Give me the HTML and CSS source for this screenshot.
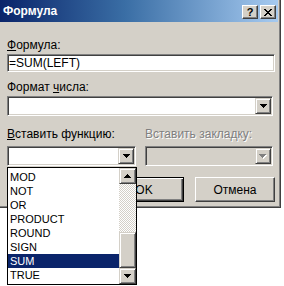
FILE: index.html
```html
<!DOCTYPE html>
<html lang="ru">
<head>
<meta charset="utf-8">
<title>Формула</title>
<link rel="stylesheet" href="styles.css">
</head>
<body>
<div class="page">
<div class="window">
  <div class="titlebar">
    <span class="title">Формула</span>
    <div class="caption-btns">
      <span class="cbtn help">?</span>
      <span class="cbtn close"><svg width="8" height="7" viewBox="0 0 8 7" shape-rendering="crispEdges"><path d="M0 0h2v1h1v1h2v-1h1v-1h2v1h-1v1h-1v1h-1v1h1v1h1v1h1v1h-2v-1h-1v-1h-2v1h-1v1h-2v-1h1v-1h1v-1h1v-1h-1v-1h-1v-1h-1z" fill="#000"/></svg></span>
    </div>
  </div>
  <div class="content">
    <div class="label label-formula"><u>Ф</u>ормула:</div>
    <div class="field">=SUM(LEFT)</div>
    <div class="label label-format">Формат <u>ч</u>исла:</div>
    <div class="combo combo-wide">
      <span class="combo-text"></span>
      <span class="drop"><svg width="7" height="4" viewBox="0 0 7 4" shape-rendering="crispEdges"><path d="M0 0h7v1h-1v1h-1v1h-1v1h-1v-1h-1v-1h-1v-1h-1z" fill="#000"/></svg></span>
    </div>
    <div class="pair">
      <div class="col col-func">
        <div class="label"><u>В</u>ставить функцию:</div>
        <div class="combo-wrap">
          <div class="combo">
            <span class="combo-text"></span>
            <span class="drop"><svg width="7" height="4" viewBox="0 0 7 4" shape-rendering="crispEdges"><path d="M0 0h7v1h-1v1h-1v1h-1v1h-1v-1h-1v-1h-1v-1h-1z" fill="#000"/></svg></span>
          </div>
          <div class="listbox">
            <ul class="items">
              <li>MOD</li>
              <li>NOT</li>
              <li>OR</li>
              <li>PRODUCT</li>
              <li>ROUND</li>
              <li>SIGN</li>
              <li class="selected">SUM</li>
              <li>TRUE</li>
            </ul>
            <div class="scrollbar">
              <span class="sbtn"><svg width="7" height="4" viewBox="0 0 7 4" shape-rendering="crispEdges"><path d="M3 0h1v1h1v1h1v1h1v1h-7v-1h1v-1h1v-1h1z" fill="#000"/></svg></span>
              <span class="track"></span>
              <span class="thumb"></span>
              <span class="sbtn"><svg width="7" height="4" viewBox="0 0 7 4" shape-rendering="crispEdges"><path d="M0 0h7v1h-1v1h-1v1h-1v1h-1v-1h-1v-1h-1v-1h-1z" fill="#000"/></svg></span>
            </div>
          </div>
        </div>
      </div>
      <div class="col col-bm">
        <div class="label disabled">Вставить закладку:</div>
        <div class="combo is-disabled">
          <span class="combo-text"></span>
          <span class="drop"><svg width="8" height="5" viewBox="0 0 8 5" shape-rendering="crispEdges"><path d="M1 1h7v1h-1v1h-1v1h-1v1h-1v-1h-1v-1h-1v-1h-1z" fill="#fff"/><path d="M0 0h7v1h-1v1h-1v1h-1v1h-1v-1h-1v-1h-1v-1h-1z" fill="#808080"/></svg></span>
        </div>
      </div>
    </div>
    <div class="buttons">
      <span class="btn default">OK</span>
      <span class="btn">Отмена</span>
    </div>
  </div>
</div>
</div>
</body>
</html>
```

FILE: styles.css
```css
* {
  box-sizing: border-box;
}

html, body {
  margin: 0;
  padding: 0;
  background: #fff;
}

body {
  font-family: "Liberation Sans", Arial, sans-serif;
  font-size: 12px;
  color: #000;
}

.page {
  min-height: 286px;
  position: relative;
}

.window {
  width: 281px;
  height: 208px;
  background: #d4d0c8;
  border-right: 1px solid #404040;
  border-bottom: 1px solid #404040;
  box-shadow: inset -1px -1px 0 #808080;
  display: flex;
  flex-direction: column;
}

.titlebar {
  height: 22px;
  margin-right: 2px;
  background: linear-gradient(to right, #0a246a 0%, #3a6ea5 45%, #a6caf0 100%);
  display: flex;
  align-items: center;
  justify-content: space-between;
  padding-left: 3px;
}

.title {
  color: #fff;
  font-weight: bold;
  font-size: 12px;
  line-height: 14px;
}

.caption-btns {
  display: flex;
  gap: 2px;
  margin-top: 2px;
  margin-right: 2px;
}

.cbtn {
  width: 16px;
  height: 14px;
  background: #d4d0c8;
  border: 1px solid;
  border-color: #fff #404040 #404040 #fff;
  box-shadow: inset -1px -1px 0 #808080;
  display: flex;
  align-items: center;
  justify-content: center;
}

.cbtn.help {
  font-weight: bold;
  font-size: 11px;
  line-height: 12px;
}

.content {
  padding: 0 5px 0 7px;
  display: flex;
  flex-direction: column;
}

.label {
  line-height: 14px;
  height: 14px;
  white-space: nowrap;
}

.label u {
  text-decoration: underline;
  text-underline-offset: 1px;
}

.label.disabled {
  color: #808080;
  text-shadow: 1px 1px 0 #fff;
}

.label-formula {
  margin-top: 16px;
}

.field {
  margin-top: 2px;
  height: 18px;
  background: #fff;
  border: 1px solid;
  border-color: #808080 #fff #fff #808080;
  box-shadow: inset 1px 1px 0 #404040, inset -1px -1px 0 #d4d0c8;
  padding: 0 1px;
  line-height: 16px;
}

.label-format {
  margin-top: 8px;
}

.combo {
  height: 20px;
  background: #fff;
  border: 1px solid;
  border-color: #808080 #fff #fff #808080;
  box-shadow: inset 1px 1px 0 #404040, inset -1px -1px 0 #d4d0c8;
  padding: 1px;
  display: flex;
}

.combo.is-disabled {
  background: #d4d0c8;
}

.combo-wide {
  margin-top: 2px;
  margin-right: 2px;
}

.combo-text {
  flex: 1;
}

.drop,
.sbtn {
  width: 16px;
  height: 16px;
  background: #d4d0c8;
  border: 1px solid;
  border-color: #d4d0c8 #404040 #404040 #d4d0c8;
  box-shadow: inset 1px 1px 0 #fff, inset -1px -1px 0 #808080;
  display: flex;
  align-items: center;
  justify-content: center;
}

.pair {
  margin-top: 11px;
  display: flex;
  gap: 9px;
  margin-right: 2px;
}

.col-func {
  width: 129px;
}

.col-bm {
  flex: 1;
}

.col .combo {
  margin-top: 5px;
}

.combo-wrap {
  position: relative;
}

.listbox {
  position: absolute;
  left: 0;
  top: calc(100% + 1px);
  width: 130px;
  height: 118px;
  background: #fff;
  border: 1px solid #000;
  display: flex;
  z-index: 5;
}

.items {
  list-style: none;
  margin: 0;
  padding: 2px 0;
  flex: 1;
}

.items li {
  height: 14px;
  line-height: 14px;
  padding-left: 2px;
  font-size: 11px;
}

.items li.selected {
  background: #0a246a;
  color: #fff;
}

.scrollbar {
  width: 17px;
  display: flex;
  flex-direction: column;
}

.scrollbar .sbtn {
  width: 17px;
  height: 16px;
}

.track {
  flex: 1;
  background-color: #fff;
  background-image: repeating-conic-gradient(#d4d0c8 0 25%, #fff 0 50%);
  background-size: 2px 2px;
}

.thumb {
  height: 36px;
  background: #d4d0c8;
  border: 1px solid;
  border-color: #d4d0c8 #404040 #404040 #d4d0c8;
  box-shadow: inset 1px 1px 0 #fff, inset -1px -1px 0 #808080;
}

.buttons {
  margin-top: 11px;
  display: flex;
  justify-content: flex-end;
  gap: 11px;
}

.btn {
  width: 80px;
  height: 25px;
  background: #d4d0c8;
  border: 1px solid;
  border-color: #fff #404040 #404040 #fff;
  box-shadow: inset -1px -1px 0 #808080;
  display: flex;
  align-items: center;
  justify-content: center;
  font-size: 12px;
}

.btn.default {
  border: 1px solid #000;
  box-shadow: inset 1px 1px 0 #fff, inset -1px -1px 0 #404040, inset -2px -2px 0 #808080;
}
```
